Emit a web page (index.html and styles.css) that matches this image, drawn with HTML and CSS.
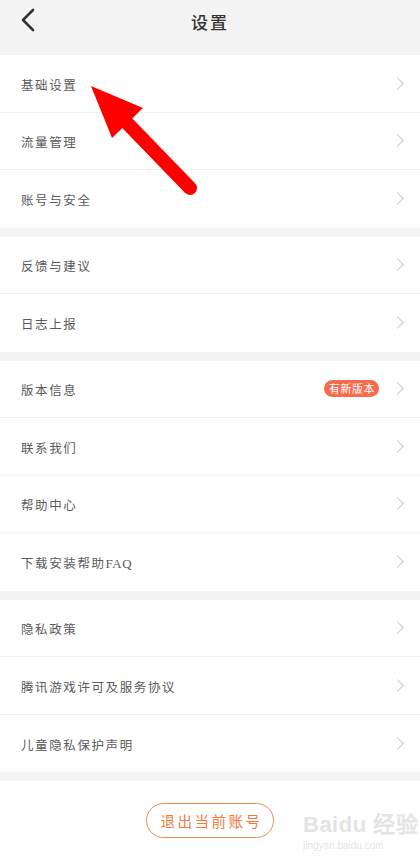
FILE: index.html
```html
<!DOCTYPE html>
<html lang="zh-CN">
<head>
    <meta charset="UTF-8">
    <meta name="viewport" content="width=device-width, initial-scale=1.0">
    <title>设置</title>
    <link rel="stylesheet" href="styles.css">
</head>
<body>
    <!-- Top bar -->
    <header class="topbar">
        <svg class="back" width="16" height="24" viewBox="0 0 16 24">
            <path d="M13 2 L3 12 L13 22" fill="none" stroke="#333" stroke-width="2.6" stroke-linecap="round" stroke-linejoin="round"/>
        </svg>
        <h1>设置</h1>
    </header>

    <section class="group">
        <div class="row"><span class="label">基础设置</span><i class="chev"></i></div>
        <div class="row"><span class="label">流量管理</span><i class="chev"></i></div>
        <div class="row"><span class="label">账号与安全</span><i class="chev"></i></div>
    </section>

    <section class="group">
        <div class="row"><span class="label">反馈与建议</span><i class="chev"></i></div>
        <div class="row"><span class="label">日志上报</span><i class="chev"></i></div>
    </section>

    <section class="group">
        <div class="row"><span class="label">版本信息</span><span class="badge">有新版本</span><i class="chev"></i></div>
        <div class="row"><span class="label">联系我们</span><i class="chev"></i></div>
        <div class="row"><span class="label">帮助中心</span><i class="chev"></i></div>
        <div class="row"><span class="label">下载安装帮助<span class="latin">FAQ</span></span><i class="chev"></i></div>
    </section>

    <section class="group">
        <div class="row"><span class="label">隐私政策</span><i class="chev"></i></div>
        <div class="row"><span class="label">腾讯游戏许可及服务协议</span><i class="chev"></i></div>
        <div class="row"><span class="label">儿童隐私保护声明</span><i class="chev"></i></div>
    </section>

    <footer class="bottom">
        <button class="logout">退出当前账号</button>
    </footer>

    <!-- annotation arrow drawn over the list -->
    <svg class="arrow" width="420" height="220" viewBox="0 0 420 220">
        <line x1="190" y1="188" x2="128" y2="124" stroke="#ff0000" stroke-width="14" stroke-linecap="round"/>
        <polygon points="91,86 143,108 112,138" fill="#ff0000"/>
    </svg>

    <!-- watermark -->
    <div class="watermark">
        <div class="wm-logo">Bai<span class="paw">du</span> 经验</div>
        <div class="wm-url">jingyan.baidu.com</div>
    </div>
</body>
</html>
```

FILE: styles.css
```css
body {
    margin: 0;
    background-color: #f4f4f4;
    font-family: "Noto Sans CJK SC", "Noto Sans", sans-serif;
    color: #555;
    width: 420px;
    height: 860px;
    overflow: hidden;
    position: relative;
}
.topbar {
    height: 55px;
    display: flex;
    align-items: center;
    justify-content: center;
    position: relative;
}
.topbar .back {
    position: absolute;
    left: 20px;
    top: 8px;
}
.topbar h1 {
    margin: 0 0 12px 0;
    font-size: 17px;
    font-weight: 500;
    color: #333;
    letter-spacing: 2px;
}
.group {
    background-color: #fff;
    margin-bottom: 9px;
}
.row {
    height: 56.5px;
    display: flex;
    align-items: center;
    padding: 0 17px 0 21px;
    border-bottom: 1px solid #f1f1f1;
}
.row:last-child {
    border-bottom: none;
    height: 57.5px;
}
.label {
    flex: 1;
    font-size: 12.5px;
    letter-spacing: 1.6px;
    color: #5a5a5a;
    margin-top: 2px;
}
.latin {
    font-family: "Liberation Serif", serif;
    font-size: 13px;
    letter-spacing: 0.5px;
}
.badge {
    background-color: #f76a4c;
    color: #fff;
    font-size: 11px;
    letter-spacing: 0.5px;
    height: 17px;
    line-height: 17px;
    padding: 0 4px 0 5px;
    border-radius: 9px;
    margin-right: 14px;
}
.chev {
    width: 8px;
    height: 8px;
    border-top: 1.5px solid #c8c8c8;
    border-right: 1.5px solid #c8c8c8;
    transform: rotate(45deg);
    margin-right: 1px;
}
.bottom {
    background-color: #fff;
    height: 80px;
    display: flex;
    justify-content: center;
    padding-top: 22px;
}
.logout {
    width: 128px;
    height: 35px;
    border: 1.5px solid #f28a4e;
    border-radius: 18px;
    background: #fff;
    color: #ef7a3c;
    font-family: "Noto Sans CJK SC", sans-serif;
    font-size: 14.5px;
    letter-spacing: 2.5px;
    padding: 0 0 0 3px;
}
.arrow {
    position: absolute;
    left: 0;
    top: 0;
    pointer-events: none;
}
.watermark {
    position: absolute;
    left: 303px;
    top: 806px;
    color: #e4e4e4;
    font-family: "Liberation Sans", sans-serif;
}
.wm-logo {
    font-size: 22px;
    font-weight: bold;
    letter-spacing: 0.5px;
}
.wm-url {
    font-size: 10px;
    margin-top: 2px;
}
```
